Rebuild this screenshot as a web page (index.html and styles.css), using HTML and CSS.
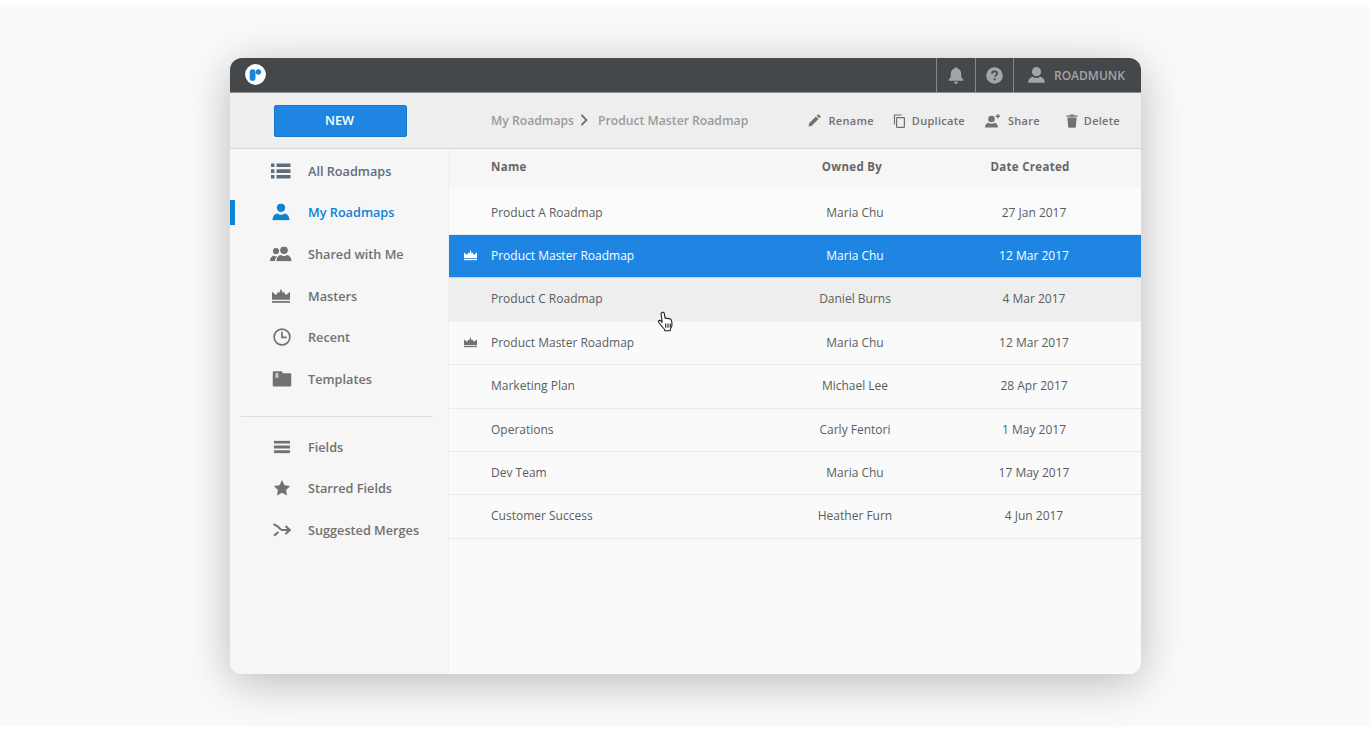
FILE: index.html
```html
<!DOCTYPE html>
<html lang="en">
<head>
<meta charset="utf-8">
<title>Roadmunk</title>
<link rel="stylesheet" href="styles.css">
</head>
<body>
<div class="stage">
  <div class="window">
    <header class="topbar">
      <svg class="logo" width="21" height="21" viewBox="0 0 21 21"><circle cx="10.500" cy="10.500" r="10.400" fill="#fff"/><rect x="4.700" y="5.300" width="5.800" height="11.500" rx="2.900" fill="#1a83dc"/><circle cx="13.400" cy="8" r="2.700" fill="#1a83dc"/></svg>
      <div class="topbar-right">
        <div class="tb-cell tb-bell"><svg width="16" height="17" viewBox="1 .4 14 15" preserveAspectRatio="none"><path d="M8 0.600c.8 0 1.300.5 1.300 1.200 2.300.6 3.200 2.500 3.200 4.700 0 2.600.6 3.900 2 5.200v.8H1.500v-.8c1.400-1.300 2-2.600 2-5.200 0-2.200.9-4.100 3.200-4.700C6.700 1.100 7.200.6 8 .6zM6.200 13.500h3.600c0 1-.8 1.800-1.800 1.800s-1.800-.8-1.800-1.800z" fill="#a3a5a7"/></svg></div>
        <div class="tb-cell tb-help"><svg width="17" height="17" viewBox="0 0 17 17"><circle cx="8.500" cy="8.500" r="8.300" fill="#a3a5a7"/><path d="M6 6.700c0-1.500 1.100-2.400 2.600-2.400 1.500 0 2.500.9 2.500 2.100 0 1-.5 1.500-1.300 2-.6.4-.8.7-.8 1.300" fill="none" stroke="#44484b" stroke-width="1.700"/><rect x="7.600" y="11.300" width="1.900" height="1.900" fill="#44484b"/></svg></div>
        <div class="tb-cell tb-user"><svg width="17" height="16" viewBox="0 0 17 16"><circle cx="8.500" cy="4.700" r="4.600" fill="#a3a5a7"/><path d="M.2 15.800c0-3.900 2.800-5.800 4.700-6 1 .8 2.200 1.200 3.600 1.200s2.600-.4 3.600-1.200c1.900.2 4.700 2.100 4.700 6z" fill="#a3a5a7"/></svg><span>ROADMUNK</span></div>
      </div>
    </header>
    <div class="toolbar">
      <div class="tool-left"><button class="new-btn">NEW</button></div>
      <div class="crumbs">
        <span>My Roadmaps</span>
        <svg class="crumb-sep" width="9" height="12" viewBox="0 0 9 12"><path d="M1.500 1l5 5-5 5" fill="none" stroke="#717171" stroke-width="1.800"/></svg>
        <span>Product Master Roadmap</span>
      </div>
      <div class="actions">
        <div class="action act-rename"><svg width="13" height="13" viewBox="0 0 13 13"><path d="M0.500 12.500l.8-3.400 6.600-6.600 2.600 2.600-6.600 6.600zM8.700 1.700l1-1c.4-.4 1-.4 1.400 0l1.200 1.200c.4.4.4 1 0 1.400l-1 1z" fill="#717171"/></svg><span>Rename</span></div>
        <div class="action act-dup"><svg width="12" height="14" viewBox="0 0 12 14"><path d="M8.500 1H1.500v9.500" fill="none" stroke="#717171" stroke-width="1.200"/><rect x="3.600" y="3.600" width="7.800" height="9.800" rx=".6" fill="none" stroke="#717171" stroke-width="1.200"/></svg><span>Duplicate</span></div>
        <div class="action act-share"><svg width="16" height="14" viewBox="0 0 16 14"><circle cx="6.500" cy="5" r="3.300" fill="#717171"/><path d="M0 13.500c0-3 2-4.500 3.500-4.700.8.700 1.800 1 3 1s2.200-.3 3-1c1.500.2 3.500 1.700 3.500 4.700z" fill="#717171"/><path d="M12.800 0v4.500M10.600 2.250h4.500" stroke="#717171" stroke-width="1.300"/></svg><span>Share</span></div>
        <div class="action act-del"><svg width="12" height="14" viewBox="0 0 12 14"><path d="M0.500 1.500h3.500l.6-1h2.800l.6 1h3.500v1.300H.5zM1.400 3.600h9.200l-.7 9.200c0 .5-.4.9-.9.9H3c-.5 0-.9-.4-.9-.9z" fill="#717171"/></svg><span>Delete</span></div>
      </div>
    </div>
    <div class="body">
      <nav class="sidebar">
        <div class="nav-group">
          <a class="nav-item nav-dark"><svg class="nav-icon" width="20" height="16" viewBox="0 0 20 16"><path d="M0 .5h3.400v3.600H0zM5.500 .5H19.500v3.600H5.500zM0 6.300h3.400v3.600H0zM5.500 6.300H19.500v3.600H5.500zM0 12h3.400v3.600H0zM5.500 12H19.500v3.600H5.500z" fill="#5f6d78"/></svg><span>All Roadmaps</span></a>
          <a class="nav-item nav-active"><svg class="nav-icon" width="18" height="17" viewBox="1 0 18 17"><circle cx="10" cy="4.300" r="4.200" fill="#0f82d6"/><path d="M1.500 16.800c0-4.300 2.800-6.600 4.900-6.800 1 .9 2.200 1.300 3.600 1.300s2.600-.4 3.600-1.300c2.100.2 4.900 2.500 4.900 6.800z" fill="#0f82d6"/></svg><span>My Roadmaps</span></a>
          <a class="nav-item"><svg class="nav-icon" width="22" height="15" viewBox="0 0 22 15"><circle cx="6" cy="4.500" r="3.100" fill="#717171"/><path d="M0 14.500c0-3.300 1.900-5 3.700-5.200.7.500 1.500.8 2.300.8.500 0 1-.1 1.500-.3-1.400 1.100-2.500 2.500-2.500 4.700z" fill="#717171"/><circle cx="14" cy="3.800" r="3.800" fill="#717171"/><path d="M6.500 14.800c0-3.800 2.500-6 4.300-6.200.9.700 2 1.100 3.200 1.100s2.300-.4 3.200-1.100c1.800.2 4.300 2.400 4.300 6.200z" fill="#717171"/></svg><span>Shared with Me</span></a>
          <a class="nav-item"><svg class="nav-icon" width="19" height="15" viewBox="0 0 19 15"><path d="M0.500 3.300l4 3.200 2.500-3.200 1 .9L9.500 0l1.500 4.200 1-.9 2.500 3.200 4-3.200v8H.5z" fill="#717171"/><rect x=".5" y="12.600" width="18" height="1.700" fill="#717171"/></svg><span>Masters</span></a>
          <a class="nav-item nav-item-r"><svg class="nav-icon" width="18" height="18" viewBox="0 0 18 18"><circle cx="9" cy="9" r="7.900" fill="none" stroke="#717171" stroke-width="1.700"/><path d="M9 3.800v5.600h4.700" fill="none" stroke="#717171" stroke-width="1.700"/></svg><span>Recent</span></a>
          <a class="nav-item nav-item-r"><svg class="nav-icon" width="19" height="16" viewBox="0 0 19 16"><path d="M1.500 0.300h7.300c.7 0 1.200.5 1.200 1.200v.8h7.500c.8 0 1.500.7 1.500 1.500v10.200c0 .8-.7 1.500-1.500 1.500H1.500c-.8 0-1.500-.7-1.500-1.500V1.800C0 1 .7.300 1.500.3z" fill="#717171"/><path d="M3 2h2.800v5.600L4.400 6.500 3 7.600z" fill="#c9c9c9"/></svg><span>Templates</span></a>
        </div>
        <div class="nav-divider"></div>
        <div class="nav-group nav-group-low">
          <a class="nav-item nav-item-r"><svg class="nav-icon" width="17" height="13" viewBox="0 0 17 13"><path d="M0.500 .2h16v2.900H.5zM.5 5h16v2.900H.5zM.5 9.800h16v2.900H.5z" fill="#717171"/></svg><span>Fields</span></a>
          <a class="nav-item nav-item-r"><svg class="nav-icon" width="17" height="16" viewBox="0 0 17 16"><path d="M8.500 0l2.500 5.300 5.700.7-4.200 3.900 1.100 5.700-5.100-2.800-5.100 2.800 1.100-5.700L.3 6l5.700-.7z" fill="#717171"/></svg><span>Starred Fields</span></a>
          <a class="nav-item nav-item-r"><svg class="nav-icon" width="18" height="14" viewBox="0 0 18 14"><path d="M.5 1.200L5 3.600C6.500 5.500 7.500 7 9 7h7.500M1 12.600L5.500 9M12.500 3l4.300 4-4.300 4" fill="none" stroke="#717171" stroke-width="2"/></svg><span>Suggested Merges</span></a>
        </div>
      </nav>
      <main class="content">
        <div class="row head">
          <div class="c-name">Name</div><div class="c-owner">Owned By</div><div class="c-date">Date Created</div>
        </div>
        <div class="gap-row"></div>
        <div class="row r-a"><div class="c-name">Product A Roadmap</div><div class="c-owner">Maria Chu</div><div class="c-date">27 Jan 2017</div></div>
        <div class="row selected"><svg class="crown" width="13" height="11" viewBox="0 0 13 11"><path d="M0 3l3 2.300L4.700 3l.8.700L6.500 0l1 3.700.8-.7L10 5.300 13 3v5.500H0z" fill="#fff"/><rect y="9.300" width="13" height="1.500" fill="#fff"/></svg><div class="c-name">Product Master Roadmap</div><div class="c-owner">Maria Chu</div><div class="c-date">12 Mar 2017</div></div>
        <div class="row hovered"><div class="c-name">Product C Roadmap</div><div class="c-owner">Daniel Burns</div><div class="c-date">4 Mar 2017</div></div>
        <div class="row"><svg class="crown" width="13" height="11" viewBox="0 0 13 11"><path d="M0 3l3 2.300L4.700 3l.8.700L6.500 0l1 3.700.8-.7L10 5.300 13 3v5.500H0z" fill="#717171"/><rect y="9.300" width="13" height="1.500" fill="#717171"/></svg><div class="c-name">Product Master Roadmap</div><div class="c-owner">Maria Chu</div><div class="c-date">12 Mar 2017</div></div>
        <div class="row"><div class="c-name">Marketing Plan</div><div class="c-owner">Michael Lee</div><div class="c-date">28 Apr 2017</div></div>
        <div class="row"><div class="c-name">Operations</div><div class="c-owner">Carly Fentori</div><div class="c-date">1 May 2017</div></div>
        <div class="row"><div class="c-name">Dev Team</div><div class="c-owner">Maria Chu</div><div class="c-date">17 May 2017</div></div>
        <div class="row"><div class="c-name">Customer Success</div><div class="c-owner">Heather Furn</div><div class="c-date">4 Jun 2017</div></div>
      </main>
    </div>
    <svg class="cursor" width="18" height="21" viewBox="0 0 18 22" preserveAspectRatio="none"><path d="M5 1.500c.9-.6 2 0 2.200 1l1 5.300c.7-.5 1.500-.4 2 .2.600-.4 1.400-.2 1.900.3.600-.3 1.400-.1 1.800.5l1 3.200c.5 2.600-.2 5-1.400 6.600l-.3 2H7.700l-.3-1.500C5.800 17.300 3.500 14.500 1.700 11.800c-.5-.8-.3-1.500.3-1.800.7-.4 1.500 0 2.100.7l1.100 1.300L4.100 3.100c-.1-.7.3-1.300.9-1.600z" fill="#fff" stroke="#222" stroke-width="1.100" stroke-linejoin="round"/><path d="M8.700 13v4.500M11 13v4.500M13.300 13v4.500" stroke="#222" stroke-width="1.100"/></svg>
  </div>
</div>
</body>
</html>
```
FILE: styles.css
```css
* { box-sizing: border-box; }
html, body { margin: 0; padding: 0; height: 733px; overflow: hidden; background: #fff; }
body { font-family: "Open Sans", "Liberation Sans", sans-serif; color: #5a5f63; }
.stage { margin-top: 7px; height: 719px; background: #fafafa; padding: 51px 0 0 230px; }
.window {
  position: relative; width: 911px; height: 616px; border-radius: 12px; background: #f6f6f6;
  box-shadow: 0 8px 46px rgba(0,0,0,.26); display: flex; flex-direction: column; overflow: visible;
}
.topbar { height: 35px; flex: none; background: #44484b; border-bottom: 1px solid #8d8f91; border-radius: 12px 12px 0 0; display: flex; align-items: center; justify-content: space-between; padding-left: 15px; }
.logo { display: block; margin-top: -1px; }
.topbar-right { display: flex; height: 100%; }
.tb-cell { border-left: 1px solid #85888a; display: flex; align-items: center; justify-content: center; height: 34px; }
.tb-bell { width: 39px; }
.tb-help { width: 38px; }
.tb-user { width: 128px; justify-content: flex-start; padding-left: 14px; gap: 9px; font-size: 12px; font-weight: 600; color: #a3a5a7; }
.toolbar { height: 56px; flex: none; background: #eeeeee; border-bottom: 1px solid #d8d8d8; display: flex; align-items: center; }
.tool-left { width: 219px; flex: none; display: flex; justify-content: center; padding-left: 2px; }
.new-btn { width: 133px; height: 32px; border: 1px solid #1878c8; border-radius: 2px; background: #1e86e2; color: #fff; font: 600 12.7px "Open Sans", sans-serif; padding: 0 2px 2px 0; }
.crumbs { margin-left: 42px; display: flex; align-items: center; font-size: 12.2px; font-weight: 600; color: #9b9b9b; white-space: nowrap; margin-top: -1px; }
.crumb-sep { margin: 0 9px 0 6px; }
.actions { margin-left: auto; display: flex; align-items: center; font-size: 11px; font-weight: 600; color: #717171; letter-spacing: .28px; }
.action { display: flex; align-items: center; }
.act-rename svg { margin-right: 8px; }
.act-dup { margin-left: 19px; }
.act-dup svg { margin-right: 7px; }
.act-share { margin-left: 20px; }
.act-share svg { margin-right: 7px; }
.act-del { margin-left: 26px; margin-right: 21px; }
.act-del svg { margin-right: 6px; }
.body { flex: 1; display: flex; min-height: 0; }
.sidebar { width: 219px; flex: none; border-right: 1px solid #efefef; border-radius: 0 0 0 12px; background: #f6f6f6; padding-top: 1px; }
.nav-group { display: flex; flex-direction: column; }
.nav-item { height: 41.6px; display: flex; align-items: center; position: relative; padding-left: 78px; font-size: 12.7px; font-weight: 600; color: #717171; white-space: nowrap; }
.nav-icon { position: absolute; left: 51px; top: 50%; transform: translate(-50%, -50%); }
.nav-item-r .nav-icon { left: 52px; }
.nav-dark { color: #5f6d78; }
.nav-active { color: #0f82d6; }
.nav-active::before { content: ""; position: absolute; left: 0; top: 8px; width: 5px; height: 25px; background: #0f82d6; }
.nav-divider { height: 1px; background: #dcdcdc; margin: 16px 15px 0 11px; }
.nav-group-low { margin-top: 10px; }
.nav-group-low .nav-item { height: 41.2px; }
.content { flex: 1; background: #fafafa; border-radius: 0 0 12px 0; font-size: 12px; font-weight: 400; }
.row { height: 43.4px; padding-bottom: 1.5px; display: flex; align-items: center; position: relative; border-bottom: 1px solid #eaeaea; font-weight: 500; font-size: 12px; color: #595d61; }
.c-name { width: 300px; padding-left: 42px; white-space: nowrap; }
.c-owner { width: 212px; text-align: center; white-space: nowrap; }
.c-date { width: 140px; text-align: center; margin-left: 3px; white-space: nowrap; }
.head { height: 39px; padding-bottom: 5px; background: #f6f6f6; border: 0; font-size: 11.5px; font-weight: 700; color: #666; letter-spacing: .3px; }
.head .c-owner { margin-left: -3px; }
.head .c-date { margin-left: 2px; }
.gap-row { height: 4px; background: #fbfbfb; }
.r-a { height: 43px; background: #fbfbfb; }
.selected { background: #1e86e2; color: #fff; border-bottom: 1px solid #bcd7ee; }
.hovered { background: #eeeeee; border-bottom-color: #f2f2f2; }
.crown { position: absolute; left: 15px; top: 50%; transform: translateY(-50%); margin-top: -1px; }
.cursor { position: absolute; left: 427px; top: 253px; }
```
